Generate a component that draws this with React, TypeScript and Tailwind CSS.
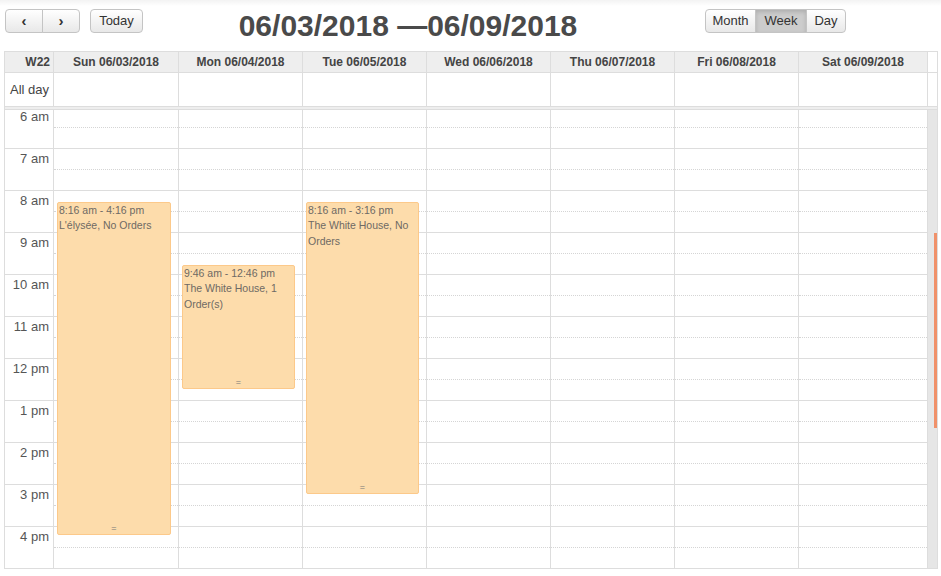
import React from "react";

const days = [
  "Sun 06/03/2018",
  "Mon 06/04/2018",
  "Tue 06/05/2018",
  "Wed 06/06/2018",
  "Thu 06/07/2018",
  "Fri 06/08/2018",
  "Sat 06/09/2018",
];

const hours = [
  "6 am", "7 am", "8 am", "9 am", "10 am", "11 am", "12 pm",
  "1 pm", "2 pm", "3 pm", "4 pm",
];

type CalEvent = { day: number; top: number; height: number; time: string; title: string };

// top/height in px from the 6 am line (42px per hour)
const events: CalEvent[] = [
  { day: 0, top: 95, height: 333, time: "8:16 am - 4:16 pm", title: "L'élysée, No Orders" },
  { day: 1, top: 158, height: 124, time: "9:46 am - 12:46 pm", title: "The White House, 1 Order(s)" },
  { day: 2, top: 95, height: 292, time: "8:16 am - 3:16 pm", title: "The White House, No Orders" },
];

// first column is one pixel wider, last one takes what's left
const colWidth = (i: number) =>
  i === 0 ? "w-[125px] shrink-0" : i === 6 ? "flex-1" : "w-[124px] shrink-0";

function Btn({ children, active, className = "" }: { children: React.ReactNode; active?: boolean; className?: string }) {
  return (
    <div
      className={`flex h-[24px] items-center justify-center border border-[#c4c4c4] text-[13px] text-[#333] ${
        active
          ? "bg-[#cccccc] shadow-[inset_0_2px_4px_rgba(0,0,0,0.15)]"
          : "bg-gradient-to-b from-[#ffffff] to-[#e8e8e8]"
      } ${className}`}
    >
      {children}
    </div>
  );
}

export default function App() {
  return (
    <div
      className="h-[576px] w-[941px] overflow-hidden bg-white"
      style={{ fontFamily: "'Liberation Sans', Arial, sans-serif" }}
    >
      {/* Toolbar */}
      <div className="relative flex h-[51px] items-start bg-gradient-to-b from-[#f3f3f3] via-white via-[12%] to-white px-[5px] pt-[9px]">
        <div className="flex">
          <Btn className="w-[38px] rounded-l-[4px] text-[15px] font-bold">‹</Btn>
          <Btn className="-ml-px w-[38px] rounded-r-[4px] text-[15px] font-bold">›</Btn>
        </div>
        <Btn className="ml-[10px] w-[53px] rounded-[4px]">Today</Btn>
        <div className="flex-1 text-center">
          <h2 className="-ml-[32px] -mt-[1px] text-[30px] font-bold leading-[36px] text-[#4a4a4a]">
            06/03/2018 —06/09/2018
          </h2>
        </div>
        <div className="mr-[90px] flex">
          <Btn className="w-[51px] rounded-l-[4px]">Month</Btn>
          <Btn active className="-ml-px w-[52px]">Week</Btn>
          <Btn className="-ml-px w-[40px] rounded-r-[4px]">Day</Btn>
        </div>
      </div>

      {/* Calendar */}
      <div className="ml-[4px] w-[934px] border border-[#dddddd] text-[#444]">
        {/* Day header */}
        <div className="flex h-[20px] bg-[#eeeeee] text-[12px] font-bold leading-[20px]">
          <div className="w-[48px] shrink-0 pr-[3px] text-right">W22</div>
          {days.map((d, i) => (
            <div key={d} className={`border-l border-[#dddddd] text-center ${colWidth(i)}`}>
              {d}
            </div>
          ))}
          <div className="w-[10px] shrink-0 border-l border-[#dddddd] bg-white" />
        </div>

        {/* All day row */}
        <div className="flex h-[34px] border-t border-[#dddddd] text-[13px]">
          <div className="w-[48px] shrink-0 pr-[4px] pt-[7px] text-right">All day</div>
          {days.map((d, i) => (
            <div key={d} className={`border-l border-[#dddddd] ${colWidth(i)}`} />
          ))}
          <div className="w-[10px] shrink-0 border-l border-[#dddddd]" />
        </div>

        {/* Divider */}
        <div className="h-[4px] border-y border-[#dddddd] bg-[#eeeeee]" />

        {/* Time grid */}
        <div className="flex h-[458px] overflow-hidden">
          <div className="-mt-[3px] flex flex-1">
            <div className="w-[48px] shrink-0">
              {hours.map((h) => (
                <div key={h} className="h-[42px] border-b border-[#dddddd] pr-[4px] pt-[2px] text-right text-[13px] leading-[16px] text-[#555]">
                  {h}
                </div>
              ))}
            </div>
            {days.map((d, i) => (
              <div key={d} className={`relative border-l border-[#dddddd] ${colWidth(i)}`}>
                {hours.map((h) => (
                  <div key={h} className="h-[42px] border-b border-[#dddddd]">
                    <div className="h-[21px] border-b border-dotted border-[#d5d5d5]" />
                  </div>
                ))}
                {events
                  .filter((e) => e.day === i)
                  .map((e) => (
                    <div
                      key={e.time}
                      className="absolute left-[3px] right-[7px] rounded-[2px] border border-[#fcc98a] bg-[#fddcab] px-[1px] text-[10.5px] text-[#6e6a64]"
                      style={{ top: e.top, height: e.height }}
                    >
                      <div className="leading-[14px]">{e.time}</div>
                      <div className="leading-[16px]">{e.title}</div>
                      <div className="absolute bottom-[1px] left-0 right-0 text-center text-[9px] leading-[9px] text-[#777]">
                        =
                      </div>
                    </div>
                  ))}
              </div>
            ))}
          </div>
          {/* Scrollbar */}
          <div className="relative w-[10px] shrink-0 border-l border-[#dddddd] bg-[#e6e6e6]">
            <div className="absolute right-0 top-[123px] h-[195px] w-[3px] bg-[#f0916a]" />
          </div>
        </div>
      </div>
    </div>
  );
}
